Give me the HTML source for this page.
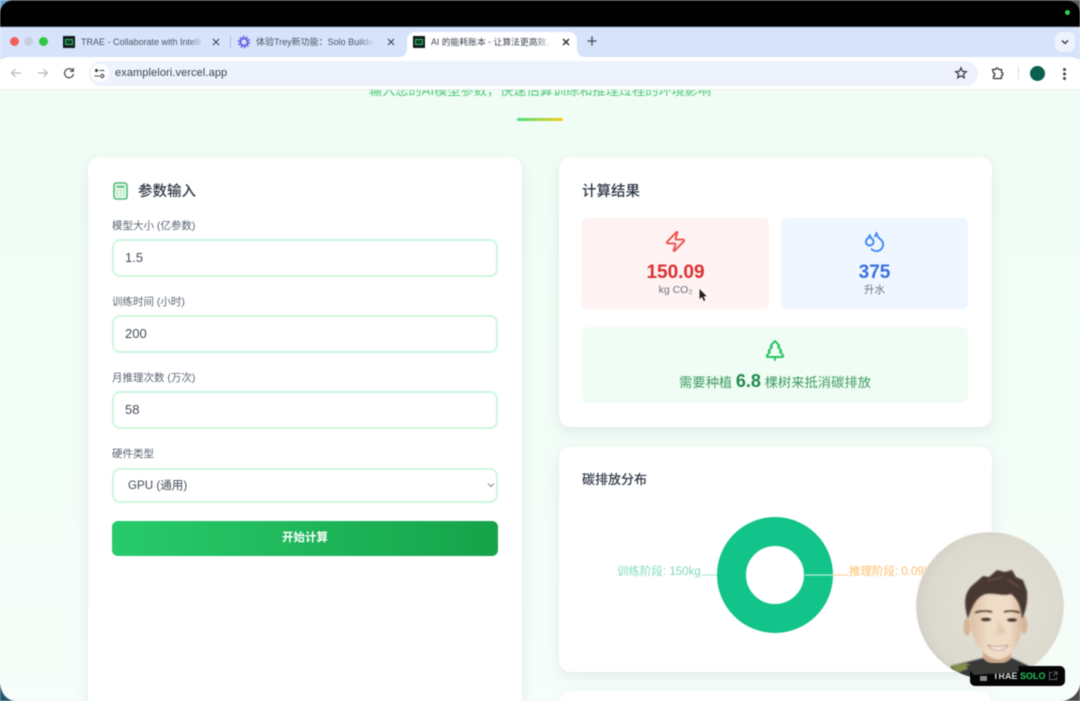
<!DOCTYPE html>
<html lang="zh"><head><meta charset="utf-8"><title>AI 的能耗账本</title>
<style>
*{box-sizing:border-box;margin:0;padding:0}
html,body{width:1080px;height:701px;overflow:hidden;background:#f0fdf6;font-family:"Liberation Sans","Noto Sans CJK SC",sans-serif}
.a{position:absolute}
.t{position:absolute;white-space:nowrap}
#wrap{position:relative;width:1080px;height:701px;overflow:hidden;filter:blur(.4px)}
.card{position:absolute;background:#fff;border-radius:12px;box-shadow:0 4px 14px rgba(0,0,0,.08)}
.inp{position:absolute;left:112px;width:386px;height:38px;background:#fff;border:2px solid #cdf7df;border-radius:8px;font-size:13px;color:#444b57;line-height:34px;padding-left:11px}
.lab{position:absolute;left:112px;font-size:10.500px;color:#5b6472;line-height:14px;white-space:nowrap}
.h{position:absolute;font-size:14.500px;font-weight:500;color:#2d3643;line-height:20px;white-space:nowrap}
.fade{-webkit-mask-image:linear-gradient(90deg,#000 88%,transparent);mask-image:linear-gradient(90deg,#000 88%,transparent);overflow:hidden}
</style></head><body><div id="wrap">
<!-- outer corners -->
<div class="a" style="left:0;top:0;width:20px;height:27px;background:#6aa5d8"></div>
<div class="a" style="left:1060px;top:0;width:20px;height:27px;background:#5a5a58"></div>
<!-- top bezel -->
<div class="a" style="left:0;top:0;width:1080px;height:27px;background:#000;border-top:1px solid #333;border-bottom:1px solid #2a2f38;border-radius:13px 13px 0 0"></div>
<div class="a" style="left:1065px;top:10px;width:5px;height:5px;border-radius:50%;background:#2fd24a"></div>
<!-- tab bar -->
<div class="a" style="left:0;top:27px;width:1080px;height:32px;background:#d6e3fb"></div>
<div class="a" style="left:10px;top:37px;width:9px;height:9px;border-radius:50%;background:#f2605a"></div>
<div class="a" style="left:24px;top:37px;width:9px;height:9px;border-radius:50%;background:#c9cfd9"></div>
<div class="a" style="left:39px;top:37px;width:9px;height:9px;border-radius:50%;background:#2fc844"></div>
<!-- tab 1 -->
<div class="a" style="left:63px;top:36px;width:12px;height:12px;background:#15181c"></div>
<div class="a" style="left:65px;top:39px;width:8px;height:6px;background:#0f3d28;border:1px solid #2fc36b"></div>
<div class="t fade" style="left:81px;top:35px;font-size:9px;line-height:14px;color:#4b5563;width:123px">TRAE - Collaborate with Intelli</div>
<svg class="a" style="left:212px;top:38px" width="8" height="8" viewBox="0 0 8 8"><path d="M1 1 7 7M7 1 1 7" stroke="#3c4350" stroke-width="1.100"/></svg>
<div class="a" style="left:230px;top:36px;width:1px;height:12px;background:#aebcd6"></div>
<!-- tab 2 -->
<svg class="a" style="left:237px;top:35px" width="14" height="14" viewBox="0 0 14 14"><circle cx="7" cy="7" r="3.600" fill="none" stroke="#6a63e8" stroke-width="2"/><circle cx="7" cy="7" r="5.400" fill="none" stroke="#6a63e8" stroke-width="1.600" stroke-dasharray="1.800 1.600"/></svg>
<div class="t fade" style="left:256px;top:35px;font-size:9px;line-height:14px;color:#4b5563;width:118px">体验Trey新功能：Solo Builder!</div>
<svg class="a" style="left:387px;top:38px" width="8" height="8" viewBox="0 0 8 8"><path d="M1 1 7 7M7 1 1 7" stroke="#3c4350" stroke-width="1.100"/></svg>
<!-- tab 3 -->
<div class="a" style="left:407px;top:32px;width:170px;height:27px;background:#fff;border-radius:8px 8px 0 0"></div>
<svg class="a" style="left:399px;top:49px" width="8" height="8" viewBox="0 0 8 8"><path d="M8 0V8H0C5 8 8 5 8 0z" fill="#fff"/></svg>
<svg class="a" style="left:577px;top:49px" width="8" height="8" viewBox="0 0 8 8"><path d="M0 0V8H8C3 8 0 5 0 0z" fill="#fff"/></svg>
<div class="a" style="left:413px;top:36px;width:12px;height:12px;background:#15181c"></div>
<div class="a" style="left:415px;top:39px;width:8px;height:6px;background:#0f3d28;border:1px solid #2fc36b"></div>
<div class="t fade" style="left:431px;top:35px;font-size:8.800px;line-height:14px;color:#3c4350;width:120px">AI 的能耗账本 - 让算法更高效、</div>
<svg class="a" style="left:562px;top:38px" width="8" height="8" viewBox="0 0 8 8"><path d="M1 1 7 7M7 1 1 7" stroke="#222" stroke-width="1.300"/></svg>
<svg class="a" style="left:587px;top:36px" width="10" height="10" viewBox="0 0 10 10"><path d="M5 .5v9M.5 5h9" stroke="#3c4350" stroke-width="1.300"/></svg>
<div class="a" style="left:1055px;top:32px;width:20px;height:20px;border-radius:7px;background:#edf2fd"></div>
<svg class="a" style="left:1061px;top:39px" width="8" height="6" viewBox="0 0 8 6"><path d="M1 1.500 4 4.500 7 1.500" fill="none" stroke="#333" stroke-width="1.300"/></svg>
<!-- toolbar -->
<div class="a" style="left:0;top:57px;width:1080px;height:33px;background:#fff;border-radius:8px 8px 0 0;border-bottom:1px solid #eef2f0"></div>
<svg class="a" style="left:9px;top:66px" width="14" height="14" viewBox="0 0 14 14"><path d="M12 7H2.500M6.500 3 2.500 7l4 4" fill="none" stroke="#b3b8bf" stroke-width="1.200"/></svg>
<svg class="a" style="left:36px;top:66px" width="14" height="14" viewBox="0 0 14 14"><path d="M2 7h9.500M7.500 3l4 4-4 4" fill="none" stroke="#b3b8bf" stroke-width="1.200"/></svg>
<svg class="a" style="left:62px;top:66px" width="14" height="14" viewBox="0 0 14 14"><path d="M11 5A4.500 4.500 0 1 0 11.500 8M11.300 2v3.300H8" fill="none" stroke="#444" stroke-width="1.200"/></svg>
<div class="a" style="left:89px;top:61px;width:889px;height:25px;border-radius:13px;background:#edf2fc"></div>
<div class="a" style="left:91px;top:64px;width:18px;height:18px;border-radius:50%;background:#fff"></div>
<svg class="a" style="left:94px;top:68px" width="11" height="11" viewBox="0 0 11 11"><circle cx="2.500" cy="2.500" r="1.600" fill="#444"/><path d="M5.500 2.500h5M.5 8h5" stroke="#444" stroke-width="1.100"/><circle cx="8.300" cy="8" r="1.600" fill="none" stroke="#444" stroke-width="1.100"/></svg>
<div class="t" style="left:115px;top:65px;font-size:11px;line-height:16px;color:#3c4350;letter-spacing:.1px">examplelori.vercel.app</div>
<svg class="a" style="left:954px;top:66px" width="14" height="14" viewBox="0 0 14 14"><path d="M7 1.800 8.500 5.300l3.800.3-2.900 2.500.9 3.700L7 9.800l-3.300 2 .9-3.700L1.700 5.600l3.800-.3z" fill="none" stroke="#333" stroke-width="1.200"/></svg>
<svg class="a" style="left:991px;top:66px" width="14" height="14" viewBox="0 0 14 14"><path d="M1.500 3.500h3a1.500 1.500 0 0 1 3 0h3v3a1.500 1.500 0 0 1 0 3v3h-8v-2.500a1.500 1.500 0 0 0 0-3z" fill="none" stroke="#333" stroke-width="1.200"/></svg>
<div class="a" style="left:1018px;top:67px;width:1px;height:12px;background:#d5dce8"></div>
<div class="a" style="left:1030px;top:66px;width:15px;height:15px;border-radius:50%;background:#0b5f4e"></div>
<div class="a" style="left:1062.500px;top:68px;width:3px;height:3px;border-radius:50%;background:#444;box-shadow:0 4.500px 0 #444,0 9px 0 #444"></div>
<!-- page -->
<div class="a" style="left:0;top:90px;width:1080px;height:611px;background:linear-gradient(180deg,#effdf5,#f3fdf8 60%,#f6fdfa);overflow:hidden">
<div class="t" style="left:0;width:1080px;text-align:center;top:-8px;font-size:13.200px;line-height:18px;color:#4cc778">输入您的AI模型参数，快速估算训练和推理过程的环境影响</div>
</div>
<div class="a" style="left:517px;top:118px;width:46px;height:3px;border-radius:2px;background:linear-gradient(90deg,#4ade80,#facc15)"></div>
<!-- left card -->
<div class="card" style="left:88px;top:157px;width:434px;height:580px"></div>
<svg class="a" style="left:113px;top:182px" width="15" height="18" viewBox="0 0 15 18"><rect x="1" y="1" width="13" height="16" rx="2.500" fill="#eefbf2" stroke="#4dbb74" stroke-width="1.600"/><rect x="3.500" y="3.500" width="8" height="2.500" fill="#6cc98c"/><path d="M3.500 8.500h1.500M6.700 8.500h1.500M9.900 8.500h1.500M3.500 11h1.500M6.700 11h1.500M9.900 11h1.500M3.500 13.500h1.500M6.700 13.500h1.500M9.900 13.500h1.500" stroke="#8ad0a4" stroke-width="1.300"/></svg>
<div class="h" style="left:138px;top:182px">参数输入</div>
<div class="lab" style="top:219px">模型大小 (亿参数)</div>
<div class="inp" style="top:239px">1.5</div>
<div class="lab" style="top:295px">训练时间 (小时)</div>
<div class="inp" style="top:315px">200</div>
<div class="lab" style="top:371px">月推理次数 (万次)</div>
<div class="inp" style="top:391px">58</div>
<div class="lab" style="top:447px">硬件类型</div>
<div class="inp" style="top:468px;height:35px;line-height:32px;padding-left:14px;font-size:11.600px">GPU (通用)</div>
<svg class="a" style="left:487px;top:482px" width="8" height="6" viewBox="0 0 8 6"><path d="M1 1.500 4 4.500 7 1.500" fill="none" stroke="#888" stroke-width="1"/></svg>
<div class="a" style="left:112px;top:521px;width:386px;height:35px;border-radius:6px;background:linear-gradient(90deg,#28cb6b,#16a34a);color:#fff;font-size:11.500px;font-weight:700;text-align:center;line-height:35px">开始计算</div>
<!-- right card 1 -->
<div class="card" style="left:559px;top:157px;width:433px;height:270px"></div>
<div class="h" style="left:582px;top:182px">计算结果</div>
<div class="a" style="left:582px;top:218px;width:187px;height:91px;background:#fef2f2;border-radius:6px"></div>
<div class="a" style="left:781px;top:218px;width:187px;height:91px;background:#eff6ff;border-radius:6px"></div>
<svg class="a" style="left:664px;top:230px" width="23" height="23" viewBox="0 0 24 24"><path d="M4 14a1 1 0 0 1-.78-1.630l9.900-10.200a.5.5 0 0 1 .86.46l-1.920 6.020A1 1 0 0 0 13 10h7a1 1 0 0 1 .78 1.630l-9.900 10.200a.5.5 0 0 1-.86-.46l1.920-6.020A1 1 0 0 0 11 14z" fill="none" stroke="#ef5350" stroke-width="2" stroke-linejoin="round"/></svg>
<div class="t" style="left:582px;width:187px;text-align:center;top:261px;font-size:19px;line-height:23px;font-weight:700;color:#dc2f2f">150.09</div>
<div class="t" style="left:582px;width:187px;text-align:center;top:283px;font-size:10.500px;line-height:14px;color:#6b7280">kg CO₂</div>
<svg class="a" style="left:698px;top:288px" width="11" height="15" viewBox="0 0 11 15"><path d="M1.500 1v10l2.500-2 1.700 4 1.600-.7-1.700-3.800 3.100-.2z" fill="#222"/></svg>
<svg class="a" style="left:863px;top:230px" width="23" height="23" viewBox="0 0 24 24" fill="none" stroke="#3f87f5" stroke-width="2" stroke-linecap="round" stroke-linejoin="round"><path d="M7 16.300c2.200 0 4-1.830 4-4.050 0-1.160-.57-2.260-1.710-3.190S7.290 6.750 7 5.300c-.29 1.450-1.140 2.840-2.290 3.760S3 11.100 3 12.250c0 2.220 1.800 4.050 4 4.050z"/><path d="M12.560 6.600A10.970 10.970 0 0 0 14 3.020c.5 2.500 2 4.900 4 6.500s3 3.500 3 5.500a6.980 6.980 0 0 1-11.910 4.970"/></svg>
<div class="t" style="left:781px;width:187px;text-align:center;top:261px;font-size:19px;line-height:23px;font-weight:700;color:#3b6fe0">375</div>
<div class="t" style="left:781px;width:187px;text-align:center;top:283px;font-size:10.500px;line-height:14px;color:#6b7280">升水</div>
<div class="a" style="left:582px;top:327px;width:386px;height:76px;background:#f0fdf4;border-radius:6px"></div>
<svg class="a" style="left:763px;top:338px" width="24" height="24" viewBox="0 0 24 24" fill="none" stroke="#28c463" stroke-width="2" stroke-linecap="round" stroke-linejoin="round"><path d="m17 14 3 3.300a1 1 0 0 1-.7 1.700H4.700a1 1 0 0 1-.7-1.700L7 14h-.3a1 1 0 0 1-.7-1.700L9 9h-.2A1 1 0 0 1 8 7.300L12 3l4 4.300a1 1 0 0 1-.8 1.700H15l3 3.300a1 1 0 0 1-.7 1.700H17Z"/><path d="M12 22v-3"/></svg>
<div class="t" style="left:582px;width:386px;text-align:center;top:369px;font-size:13.300px;line-height:24px;color:#3f9c63">需要种植 <span style="font-size:18px;font-weight:700;color:#1f8a4a">6.8</span> 棵树来抵消碳排放</div>
<!-- right card 2 -->
<div class="card" style="left:559px;top:447px;width:433px;height:225px"></div>
<div class="h" style="left:582px;top:470px;font-size:13px">碳排放分布</div>
<svg class="a" style="left:600px;top:505px" width="340" height="140" viewBox="600 505 340 140">
<circle cx="775" cy="575" r="43.500" fill="none" stroke="#12c48a" stroke-width="29"/>
<path d="M702 575H717" stroke="#a5e6cd" stroke-width="1"/>
<path d="M805 575H833" stroke="#b8ecd8" stroke-width="1.200"/>
<path d="M833 575H849" stroke="#fbd79b" stroke-width="1.200"/>
</svg>
<div class="t" style="left:617px;top:564px;font-size:11.500px;line-height:16px;color:#7fdcb8">训练阶段: 150kg</div>
<div class="t" style="left:849px;top:564px;font-size:11.500px;line-height:16px;color:#fbbf6a">推理阶段: 0.09kg</div>
<!-- right card 3 -->
<div class="card" style="left:559px;top:691px;width:433px;height:60px"></div>
<!-- corners -->
<svg class="a" style="left:0;top:683px" width="15" height="18" viewBox="0 0 15 18"><path d="M0 0C1 10 6 17 15 18H0z" fill="#24566e"/></svg>
<svg class="a" style="left:1062px;top:684px" width="18" height="17" viewBox="0 0 18 17"><path d="M18 0C17 9 10 16 0 17H18z" fill="#4a4a46"/></svg>
<!-- webcam bubble -->
<svg class="a" style="left:915px;top:531px" width="150" height="150" viewBox="0 0 150 150">
<defs>
<clipPath id="c"><circle cx="75" cy="75" r="74"/></clipPath>
<radialGradient id="bg" cx=".55" cy=".5" r=".65"><stop offset="0" stop-color="#e4e1d8"/><stop offset=".7" stop-color="#dcd9cf"/><stop offset="1" stop-color="#c9c5bd"/></radialGradient>
<linearGradient id="sk" x1="0" x2="1" y1="0" y2="0"><stop offset="0" stop-color="#dcbfa3"/><stop offset=".35" stop-color="#efdcc6"/><stop offset=".75" stop-color="#efdcc6"/><stop offset="1" stop-color="#d8b99c"/></linearGradient>
<filter id="b"><feGaussianBlur stdDeviation="1.600"/></filter>
<filter id="b2"><feGaussianBlur stdDeviation=".9"/></filter>
</defs>
<g clip-path="url(#c)">
<rect width="150" height="150" fill="url(#bg)"/>
<path d="M36 135 68 127H97L114 135V150H36z" fill="#393937" filter="url(#b2)"/>
<path d="M35 134 52 132 58 136 42 142z" fill="#a3b25a" opacity=".7" filter="url(#b2)"/>
<path d="M68 114H96V127C91 135 73 135 68 127z" fill="#cba98c" filter="url(#b2)"/>
<ellipse cx="52" cy="96" rx="3.500" ry="9" fill="#d6b598" filter="url(#b2)"/>
<ellipse cx="109" cy="94" rx="3.500" ry="9" fill="#d6b598" filter="url(#b2)"/>
<path d="M55 80C54 100 60 118 75 126C82 130 90 129 96 122C104 114 108 100 107 80C105 66 95 58 80 58C65 58 56 66 55 80z" fill="url(#sk)" filter="url(#b2)"/>
<path d="M53 88C48 72 49 60 60 52L68 45 74 46 82 39 90 41 97 39 101 46 108 49 112 60C113 72 110 82 107 88C106 76 103 68 96 63C88 66 76 60 68 64C60 68 56 78 53 88z" fill="#463830" filter="url(#b2)"/>
<path d="M72 50 88 46M92 48 104 56" stroke="#6a5648" stroke-width="2" opacity=".7" filter="url(#b2)"/>
<path d="M60 82Q68 78 77 81M89 81Q97 78 105 82" fill="none" stroke="#5a4436" stroke-width="2" filter="url(#b2)"/>
<ellipse cx="71" cy="88.500" rx="5" ry="1.700" fill="#3f342c" filter="url(#b2)"/>
<ellipse cx="97" cy="89" rx="5" ry="1.700" fill="#3f342c" filter="url(#b2)"/>
<path d="M84 90l-3 11c2 4 8 4 10 0z" fill="#dfc3a6" opacity=".75" filter="url(#b)"/>
<path d="M73 114C78 116 88 116 93 114C89 121 77 121 73 114z" fill="#f4efe8" stroke="#b57a68" stroke-width="1" filter="url(#b2)" stroke-opacity=".8"/>
</g>
<circle cx="75" cy="75" r="74" fill="none" stroke="#f2f0ea" stroke-width=".8"/>
</svg>
<!-- badge -->
<div class="a" style="left:970px;top:666px;width:95px;height:20px;border-radius:5px;background:#050505"></div>
<div class="a" style="left:980px;top:676px;width:7px;height:5px;background:#888"></div>
<div class="t" style="left:993px;top:669px;font-size:9px;line-height:14px;font-weight:700;color:#ddd">TRAE <span style="color:#22c55e">SOLO</span></div>
<svg class="a" style="left:1048px;top:671px" width="10" height="10" viewBox="0 0 10 10"><path d="M4 1.500H1.500v7h7V6M5.500 1H9v3.500M9 1 5 5" fill="none" stroke="#666" stroke-width="1"/></svg>
<!-- shirt overlapping the badge's left part -->
<svg class="a" style="left:966px;top:660px" width="56" height="18" viewBox="0 0 56 18"><path d="M0 6 16 3H52L53 11 46 13 22 14 8 15z" fill="#393937"/></svg>
</div></body></html>
